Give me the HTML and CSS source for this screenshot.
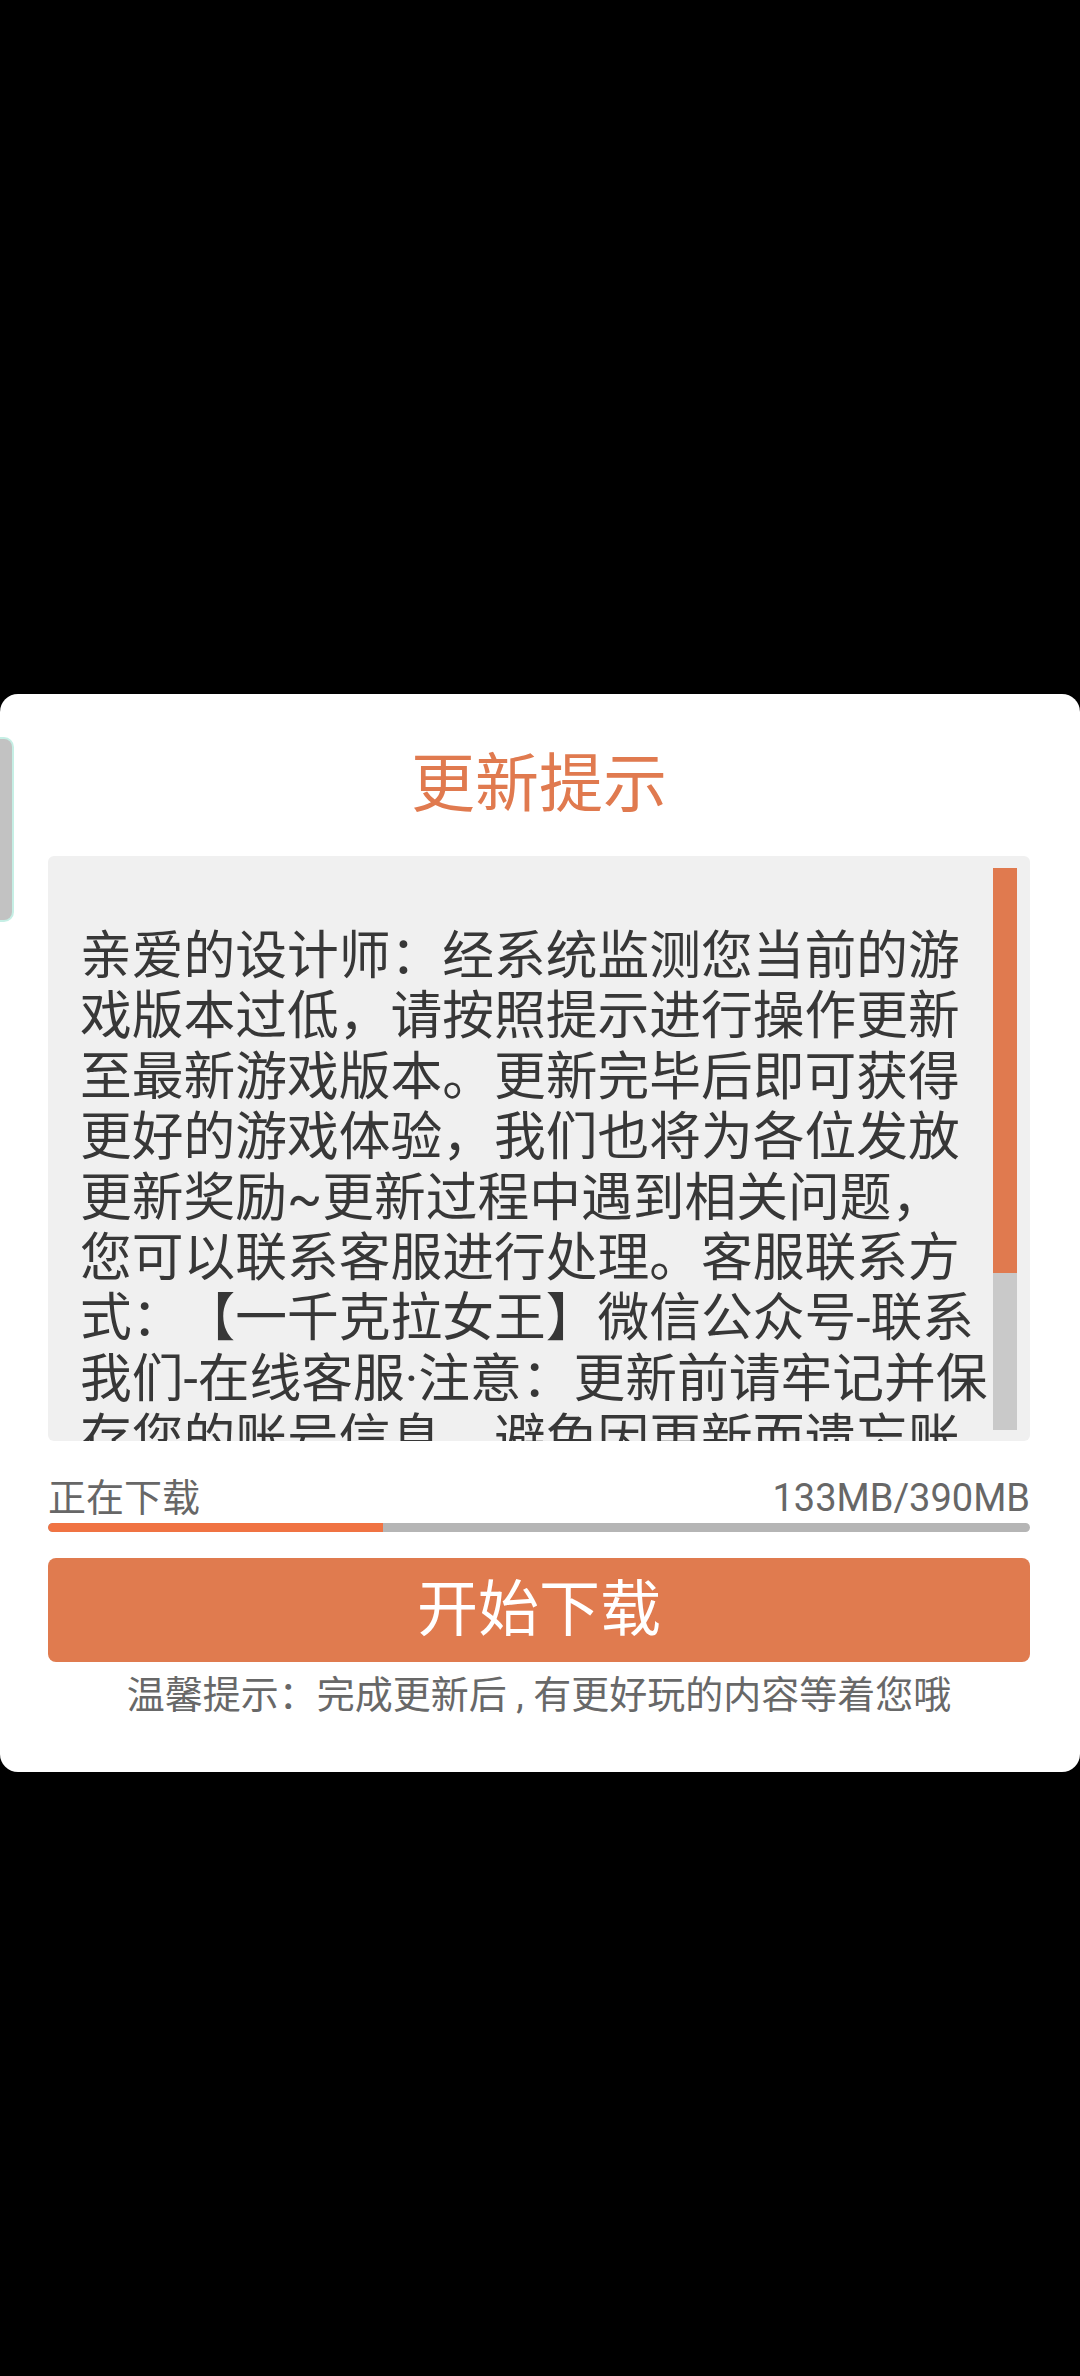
FILE: index.html
```html
<!DOCTYPE html>
<html lang="zh-CN">
<head>
<meta charset="utf-8">
<title>更新提示</title>
<link rel="stylesheet" href="styles.css">
</head>
<body>
<div class="side-tab"></div>
<div class="screen">
  <section class="dialog">
    <h1 class="title">更新提示</h1>
    <div class="notice">
      <p class="notice-text">亲爱的设计师：经系统监测您当前的游<br>戏版本过低，请按照提示进行操作更新<br>至最新游戏版本。更新完毕后即可获得<br>更好的游戏体验，我们也将为各位发放<br>更新奖励~更新过程中遇到相关问题，<br>您可以联系客服进行处理。客服联系方<br>式：【一千克拉女王】微信公众号-联系<br>我们-在线客服·注意：更新前请牢记并保<br>存您的账号信息，避免因更新而遗忘账</p>
      <div class="scrollbar"><div class="scrollbar-thumb"></div></div>
    </div>
    <div class="status">
      <span class="status-label">正在下载</span>
      <span class="status-size">133MB/390MB</span>
    </div>
    <div class="progress"><div class="progress-fill" style="width:34.1%"></div></div>
    <button class="download">开始下载</button>
    <p class="tip">温馨提示：完成更新后 , 有更好玩的内容等着您哦</p>
  </section>
</div>
</body>
</html>
```

FILE: styles.css
```css
html, body {
  margin: 0;
  padding: 0;
  background: #000;
}

body {
  width: 1080px;
  height: 2376px;
  position: relative;
  overflow: hidden;
  font-family: Roboto, "Noto Sans CJK SC", sans-serif;
  text-spacing-trim: space-all;
}

.side-tab {
  position: absolute;
  left: 0;
  top: 737px;
  width: 12px;
  height: 181px;
  background: #c2c2c2;
  border: 2px solid #c6efe5;
  border-left: none;
  border-radius: 0 10px 10px 0;
  z-index: 2;
}

.screen {
  padding-top: 694px;
}

.dialog {
  background: #fff;
  border-radius: 18px;
  padding: 59px 50px 54px 48px;
  display: flex;
  flex-direction: column;
}

.title {
  margin: 0;
  font-size: 64px;
  line-height: 64px;
  font-weight: 400;
  color: #e07a4f;
  text-align: center;
}

.notice {
  position: relative;
  margin-top: 39px;
  height: 585px;
  box-sizing: border-box;
  padding: 71px 0 0 32px;
  background: #f0f0f0;
  border-radius: 6px;
  overflow: hidden;
}

.notice-text {
  margin: 0;
  font-size: 51.75px;
  line-height: 60.4px;
  color: #373737;
  white-space: nowrap;
  text-spacing-trim: space-all;
}

.scrollbar {
  position: absolute;
  top: 12px;
  right: 13px;
  width: 24px;
  height: 562px;
  background: #c9c9c9;
}

.scrollbar-thumb {
  height: 405px;
  background: #e07a4f;
}

.status {
  margin-top: 34px;
  display: flex;
  justify-content: space-between;
  font-size: 38px;
  line-height: 46px;
  color: #676767;
}

.progress {
  margin-top: 2px;
  height: 9px;
  border-radius: 5px;
  background: #b5b5b5;
  overflow: hidden;
}

.progress-fill {
  height: 100%;
  background: #f07343;
  border-radius: 5px 0 0 5px;
}

.download {
  margin-top: 26px;
  height: 104px;
  border: 0;
  border-radius: 8px;
  background: #e07b4f;
  color: #fff;
  font-family: Roboto, "Noto Sans CJK SC", sans-serif;
  font-size: 61px;
  line-height: 104px;
  padding: 0;
}

.tip {
  margin: 10px 0 0;
  font-size: 38px;
  line-height: 46px;
  color: #686868;
  text-align: center;
}
```
